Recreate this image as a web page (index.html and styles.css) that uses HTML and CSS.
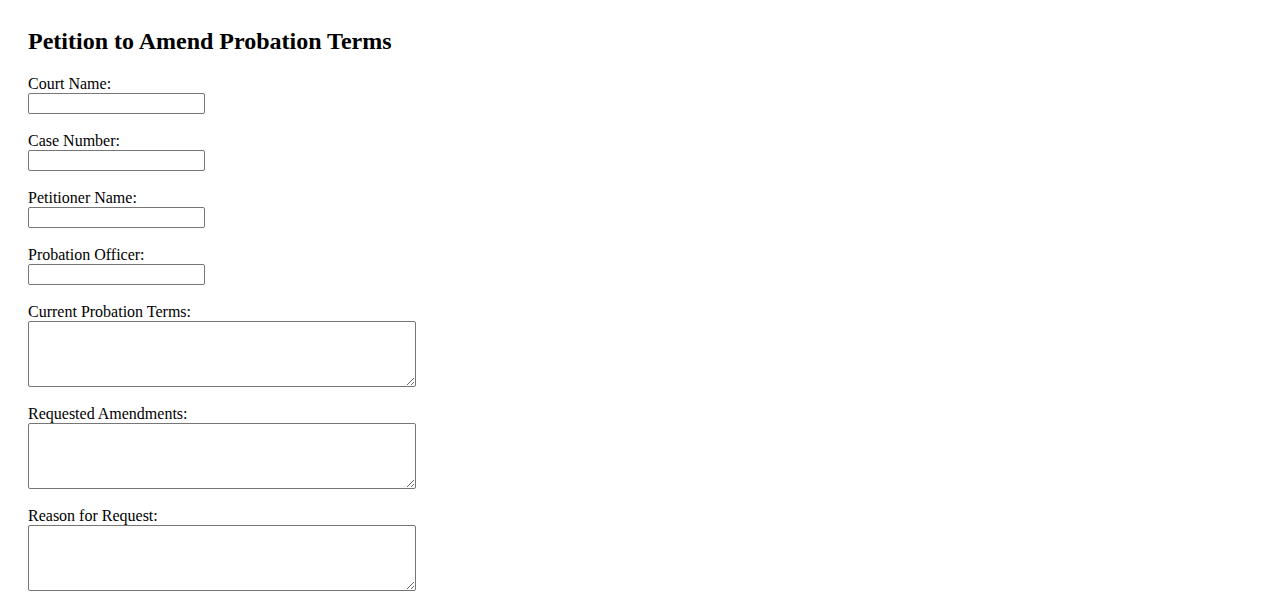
FILE: index.html
```html
<!DOCTYPE html>
<html lang="en">
<head>
<meta charset="utf-8">
<title>Petition to Amend Probation Terms</title>
<link rel="stylesheet" href="styles.css">
</head>
<body>
<main class="page">
  <h2 class="title">Petition to Amend Probation Terms</h2>
  <form class="form">
    <div class="field">
      <label class="label" for="court">Court Name:</label>
      <input class="text-input" type="text" id="court">
    </div>
    <div class="field">
      <label class="label" for="case">Case Number:</label>
      <input class="text-input" type="text" id="case">
    </div>
    <div class="field">
      <label class="label" for="petitioner">Petitioner Name:</label>
      <input class="text-input" type="text" id="petitioner">
    </div>
    <div class="field">
      <label class="label" for="officer">Probation Officer:</label>
      <input class="text-input" type="text" id="officer">
    </div>
    <div class="field">
      <label class="label" for="current">Current Probation Terms:</label>
      <textarea class="text-area" id="current"></textarea>
    </div>
    <div class="field">
      <label class="label" for="amend">Requested Amendments:</label>
      <textarea class="text-area" id="amend"></textarea>
    </div>
    <div class="field">
      <label class="label" for="reason">Reason for Request:</label>
      <textarea class="text-area" id="reason"></textarea>
    </div>
  </form>
</main>
</body>
</html>
```

FILE: styles.css
```css
html, body {
  margin: 0;
  padding: 0;
  background: #ffffff;
}

body {
  font-family: "Liberation Serif", "Times New Roman", serif;
  font-size: 16px;
  color: #000000;
}

.page {
  padding: 27px 28px 0 28px;
}

.title {
  margin: 0 0 20px 0;
  font-size: 24px;
  line-height: 28px;
  font-weight: bold;
}

.form {
  display: flex;
  flex-direction: column;
}

.field {
  display: flex;
  flex-direction: column;
  align-items: flex-start;
  margin-bottom: 18px;
}

.label {
  display: block;
  line-height: 18px;
  height: 18px;
}

.text-input {
  display: block;
  box-sizing: border-box;
  width: 177px;
  height: 21px;
  margin: 0;
  padding: 1px 2px;
  border: 1px solid #767676;
  border-radius: 2px;
  font-family: "Liberation Sans", Arial, sans-serif;
  font-size: 13.33px;
  background: #ffffff;
}

.text-area {
  display: block;
  box-sizing: border-box;
  width: 388px;
  height: 66px;
  margin: 0;
  padding: 2px;
  border: 1px solid #767676;
  border-radius: 2px;
  font-family: "Liberation Mono", "Courier New", monospace;
  font-size: 13.33px;
  background: #ffffff;
  resize: both;
}
```
